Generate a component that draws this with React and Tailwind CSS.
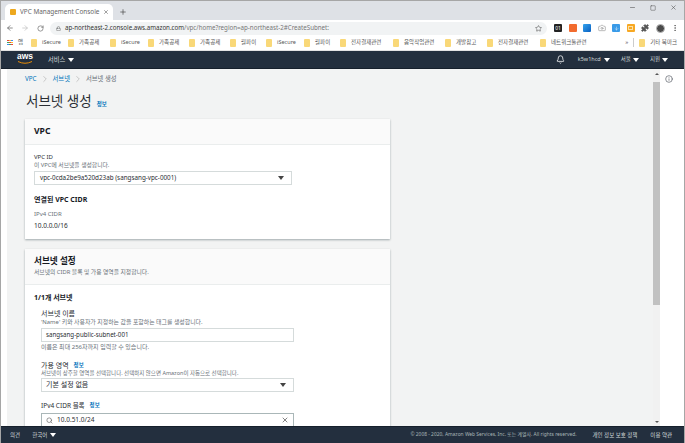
import { ArrowLeft, ArrowRight, ChevronRight, RotateCw, Lock, Star, X, Plus, Minus, Square, Bell, Search, Info, Puzzle, MoreVertical, Camera } from 'lucide-react';

const kr = "font-['Noto_Sans','Noto_Sans_CJK_KR',sans-serif]";

const bookmarks = [
  ['iSecure', 17], ['가족공제', 22], ['iSecure', 18], ['가족공제', 21], ['가족공제', 21], ['월파이', 16],
  ['iSecure', 18], ['월파이', 16], ['전자결재관련', 33], ['음악작업관련', 32], ['개발참고', 22], ['전자결재관련', 33], ['네트워크툴관련', 38],
];

const appDots = ['bg-[#e8453c]', 'bg-[#f9bb2d]', 'bg-[#3c8bf5]', 'bg-[#3aa757]', 'bg-[#e8453c]', 'bg-[#f9bb2d]', 'bg-[#3c8bf5]', 'bg-[#3aa757]', 'bg-[#e8453c]'];

function Folder() {
  return <span className="w-[6px] h-[8px] rounded-[1px] bg-[#f9d878] shrink-0" />;
}

function Caret({ className = 'border-t-white' }) {
  return <span className={`block w-0 h-0 border-x-[3px] border-x-transparent border-t-[4px] ${className}`} />;
}

function Ext({ className, children }) {
  return <span className={`w-[8px] h-[8px] rounded-[1px] flex items-center justify-center text-[5px] leading-none text-white ${className}`}>{children}</span>;
}

function Card({ title, desc, children }) {
  return (
    <section className="w-[365px] bg-white shadow-[0_1px_2px_rgba(0,28,36,0.35)]">
      <div className="bg-[#fafafa] border-b border-[#eaeded] px-[9px] pt-[6px] pb-[7px]">
        <h2 className="text-[8.6px] leading-[12px] font-bold text-[#16191f]">{title}</h2>
        {desc && <p className="mt-[1px] mb-[1px] text-[5.8px] leading-[8px] text-[#687078]">{desc}</p>}
      </div>
      {children}
    </section>
  );
}

function SelectBox({ children, className = '' }) {
  return (
    <div className={`h-[14px] border border-[#d5dbdb] bg-white flex items-center justify-between pr-[7px] text-[#2a2e33] ${className}`}>
      <span>{children}</span>
      <Caret className="border-t-[#444]" />
    </div>
  );
}

function InfoLink() {
  return <span className="text-[5.5px] text-[#0073bb] font-bold">정보</span>;
}

export default function App() {
  return (
    <div className={`w-[685px] h-[443px] overflow-hidden flex flex-col bg-white border-t border-x border-[#a6a6a6] ${kr}`}>
      {/* Tab strip */}
      <div className="h-[19px] bg-[#dee1e6] flex items-end pl-[4px] shrink-0">
        <div className="w-[108px] h-[16px] bg-white rounded-t-[5px] flex items-center pl-[5px] pr-[4px] gap-[4px]">
          <span className="w-[6px] h-[6px] rounded-[1px] bg-[#eda81f] shrink-0" />
          <span className="text-[6.4px] text-[#666] flex-1 whitespace-nowrap">VPC Management Console</span>
          <X size={6} className="text-[#444] shrink-0" />
        </div>
        <Plus size={8} className="text-[#444] ml-[6px] mb-[4px]" />
        <div className="ml-auto flex items-center gap-[14px] pr-[7px] self-start pt-[3px] text-[#555]">
          <Minus size={7} />
          <Square size={6} />
          <X size={7} />
        </div>
      </div>

      {/* Address bar */}
      <div className="h-[16px] bg-white flex items-center pl-[5px] shrink-0">
        <ArrowLeft size={8} className="text-[#555]" />
        <ArrowRight size={8} className="text-[#bbb] ml-[7px]" />
        <RotateCw size={7} className="text-[#555] ml-[7.5px]" />
        <div className="ml-[6.5px] w-[497px] h-[13px] rounded-full bg-[#f1f3f4] flex items-center pl-[6px] pr-[5px] shrink-0">
          <Lock size={5} className="text-[#555]" />
          <span className="ml-[4px] text-[6.2px] whitespace-nowrap">
            <span className="text-[#333]">ap-northeast-2.console.aws.amazon.com</span>
            <span className="text-[#777]">/vpc/home?region=ap-northeast-2#CreateSubnet:</span>
          </span>
          <Star size={7} className="ml-auto text-[#555]" />
        </div>
        <div className="ml-[7px] flex items-center gap-[6.5px]">
          <Ext className="bg-[#222]">01</Ext>
          <Ext className="bg-[#f26b2e]" />
          <Ext className="bg-gradient-to-br from-[#35a4ee] to-[#0b5fc0]" />
          <Camera size={8} className="text-[#999]" />
          <Ext className="bg-[#3a9be8]"><ArrowRight size={5} className="rotate-90" /></Ext>
          <Ext className="bg-[#f7a823]"><span className="w-[5px] h-[4px] border border-[#fde0a5]" /></Ext>
          <Puzzle size={8} className="text-[#555] fill-[#555]" />
          <span className="w-[9px] h-[9px] rounded-full bg-[#4a4a4a] border border-[#bbb]" />
          <MoreVertical size={8} className="text-[#555]" />
        </div>
      </div>

      {/* Bookmarks */}
      <div className="h-[15px] bg-white flex items-center pl-[6px] pr-[7px] pb-[1px] text-[5.5px] text-[#555] shrink-0 border-b border-[#e3e3e3] whitespace-nowrap">
        <span className="grid grid-cols-3 gap-[0.5px] w-[6px]">
          {appDots.map((dot, i) => <span key={i} className={`h-[1.5px] ${dot}`} />)}
        </span>
        <span className="ml-[5px] mr-[8px]">앱</span>
        <div className="flex items-center gap-[9px]">
          {bookmarks.map(([label, width], i) => (
            <span key={i} className="flex items-center gap-[5px]">
              <Folder />
              <span style={{ width }}>{label}</span>
            </span>
          ))}
        </div>
        <span className="ml-auto text-[6px] text-[#555]">»</span>
        <span className="w-px h-[9px] bg-[#ccc] ml-[5px] mr-[5px]" />
        <Folder />
        <span className="ml-[5px]">기타 북마크</span>
      </div>

      {/* Console nav */}
      <header className="h-[18px] bg-[#232f3e] flex items-center pl-[16px] pr-[16px] text-white shrink-0 border-b border-[#16202c]">
        <span className="relative -top-[1px] flex flex-col items-center w-[16px]">
          <span className="font-['Liberation_Sans',sans-serif] font-bold text-[8.5px] leading-[7px]">aws</span>
          <svg width="16" height="3" viewBox="0 0 16 3" className="mt-[0.5px]">
            <path d="M1 0.5 Q8 4 15 0.5" fill="none" stroke="#f90" strokeWidth="0.9" />
          </svg>
        </span>
        <span className="ml-[15px] text-[6.3px] text-[#d5dbdb]">서비스</span>
        <Caret className="border-t-white ml-[3px]" />
        <Bell size={9} className="ml-auto" />
        <span className="ml-[12.5px] text-[5.5px] text-[#d5dbdb]">k5w1hcd</span>
        <Caret className="border-t-white ml-[3px]" />
        <span className="ml-[11px] text-[5.5px] text-[#d5dbdb]">서울</span>
        <Caret className="border-t-white ml-[2px]" />
        <span className="ml-[11px] text-[5.5px] text-[#d5dbdb]">지원</span>
        <Caret className="border-t-white ml-[2px]" />
      </header>

      {/* Main */}
      <div className="flex-1 min-h-0 flex">
        <div className="w-[6px] bg-white shrink-0" />
        <main className="w-[646px] bg-[#f2f3f3] overflow-hidden pl-[18px] shrink-0">
          <nav className="h-[20px] flex items-center text-[6.3px]">
            <span className="text-[#0073bb]">VPC</span>
            <ChevronRight size={10} strokeWidth={1} className="text-[#888] mx-[3px]" />
            <span className="text-[#0073bb]">서브넷</span>
            <ChevronRight size={10} strokeWidth={1} className="text-[#888] mx-[3px]" />
            <span className="text-[#687078]">서브넷 생성</span>
          </nav>
          <div className="h-[24px] mb-[6px] flex items-baseline gap-[5px] pl-[1px]">
            <h1 className="text-[13.5px] leading-[24px] text-[#2a2e33]">서브넷 생성</h1>
            <InfoLink />
          </div>
          <div className="flex flex-col gap-[10px]">
            <Card title="VPC">
              <div className="px-[9px] pt-[8px] pb-[9px]">
                <p className="text-[6px] leading-[8px] text-[#2a2e33]">VPC ID</p>
                <p className="text-[5.8px] leading-[8px] text-[#687078]">이 VPC에 서브넷을 생성합니다.</p>
                <SelectBox className="mt-[2px] w-[258px] pl-[5px] text-[6.3px]">vpc-0cda2be9a520d23ab (sangsang-vpc-0001)</SelectBox>
                <h3 className="mt-[10px] text-[7px] leading-[10px] font-bold text-[#16191f]">연결된 VPC CIDR</h3>
                <p className="mt-[5px] text-[6px] leading-[8px] text-[#687078]">IPv4 CIDR</p>
                <p className="mt-[4px] text-[6.5px] leading-[8px] text-[#2a2e33]">10.0.0.0/16</p>
              </div>
            </Card>
            <Card title="서브넷 설정" desc="서브넷의 CIDR 블록 및 가용 영역을 지정합니다.">
              <div className="px-[9px] pt-[8px]">
                <h3 className="text-[7px] leading-[10px] font-bold text-[#16191f]">1/1개 서브넷</h3>
                <div className="pl-[7px] mt-[7px] w-[260px]">
                  <p className="text-[7px] leading-[8px] text-[#2a2e33]">서브넷 이름</p>
                  <p className="text-[5.9px] leading-[8px] text-[#687078] whitespace-nowrap">'Name' 키와 사용자가 지정하는 값을 포함하는 태그를 생성합니다.</p>
                  <div className="mt-[2px] h-[14px] border border-[#d5dbdb] flex items-center pl-[4px] text-[6.2px] text-[#2a2e33]">sangsang-public-subnet-001</div>
                  <p className="mt-[1px] text-[6px] leading-[8px] text-[#687078]">이름은 최대 256자까지 입력할 수 있습니다.</p>
                  <p className="mt-[10px] text-[7px] leading-[9px] text-[#2a2e33] flex items-center gap-[5px]">가용 영역 <InfoLink /></p>
                  <p className="text-[5.5px] leading-[7px] text-[#687078] whitespace-nowrap">서브넷이 상주할 영역을 선택합니다. 선택하지 않으면 Amazon이 자동으로 선택합니다.</p>
                  <SelectBox className="mt-[1px] pl-[4px] text-[7px]">기본 설정 없음</SelectBox>
                  <p className="mt-[9px] text-[6.5px] leading-[9px] text-[#2a2e33] flex items-center gap-[5px]">IPv4 CIDR 블록 <InfoLink /></p>
                  <div className="mt-[3px] h-[14px] border border-[#aab7b8] flex items-center pl-[4px] pr-[4px] text-[6.5px] text-[#2a2e33]">
                    <Search size={7} className="text-[#555]" />
                    <span className="ml-[4px]">10.0.51.0/24</span>
                    <X size={8} className="ml-auto text-[#444]" />
                  </div>
                </div>
              </div>
            </Card>
          </div>
        </main>
        {/* Scrollbar */}
        <div className="w-[7px] bg-[#f1f1f1] flex flex-col items-center shrink-0">
          <span className="mt-[4px] w-0 h-0 border-x-[2px] border-x-transparent border-b-[2px] border-b-[#555]" />
          <span className="mt-[7px] w-full h-[223px] bg-[#c1c1c1]" />
          <span className="mt-auto mb-[3px] w-0 h-0 border-x-[2px] border-x-transparent border-t-[2px] border-t-[#555]" />
        </div>
        <aside className="flex-1 bg-white pt-[6px] pl-[5px]">
          <Info size={8} className="text-[#545b64]" />
        </aside>
      </div>

      {/* Footer */}
      <footer className="h-[17px] bg-[#232f3e] border-t border-[#16202c] flex items-center pl-[9px] pr-[12px] text-[5.5px] text-[#d5dbdb] shrink-0 whitespace-nowrap">
        <span>의견</span>
        <span className="ml-[12px]">한국어</span>
        <Caret className="border-t-white ml-[3px]" />
        <span className="ml-auto text-[4.9px] text-[#aab7b8]">© 2008 - 2020, Amazon Web Services, Inc. 또는 계열사. All rights reserved.</span>
        <span className="ml-[16px]">개인 정보 보호 정책</span>
        <span className="ml-[13px]">이용 약관</span>
      </footer>
    </div>
  );
}
